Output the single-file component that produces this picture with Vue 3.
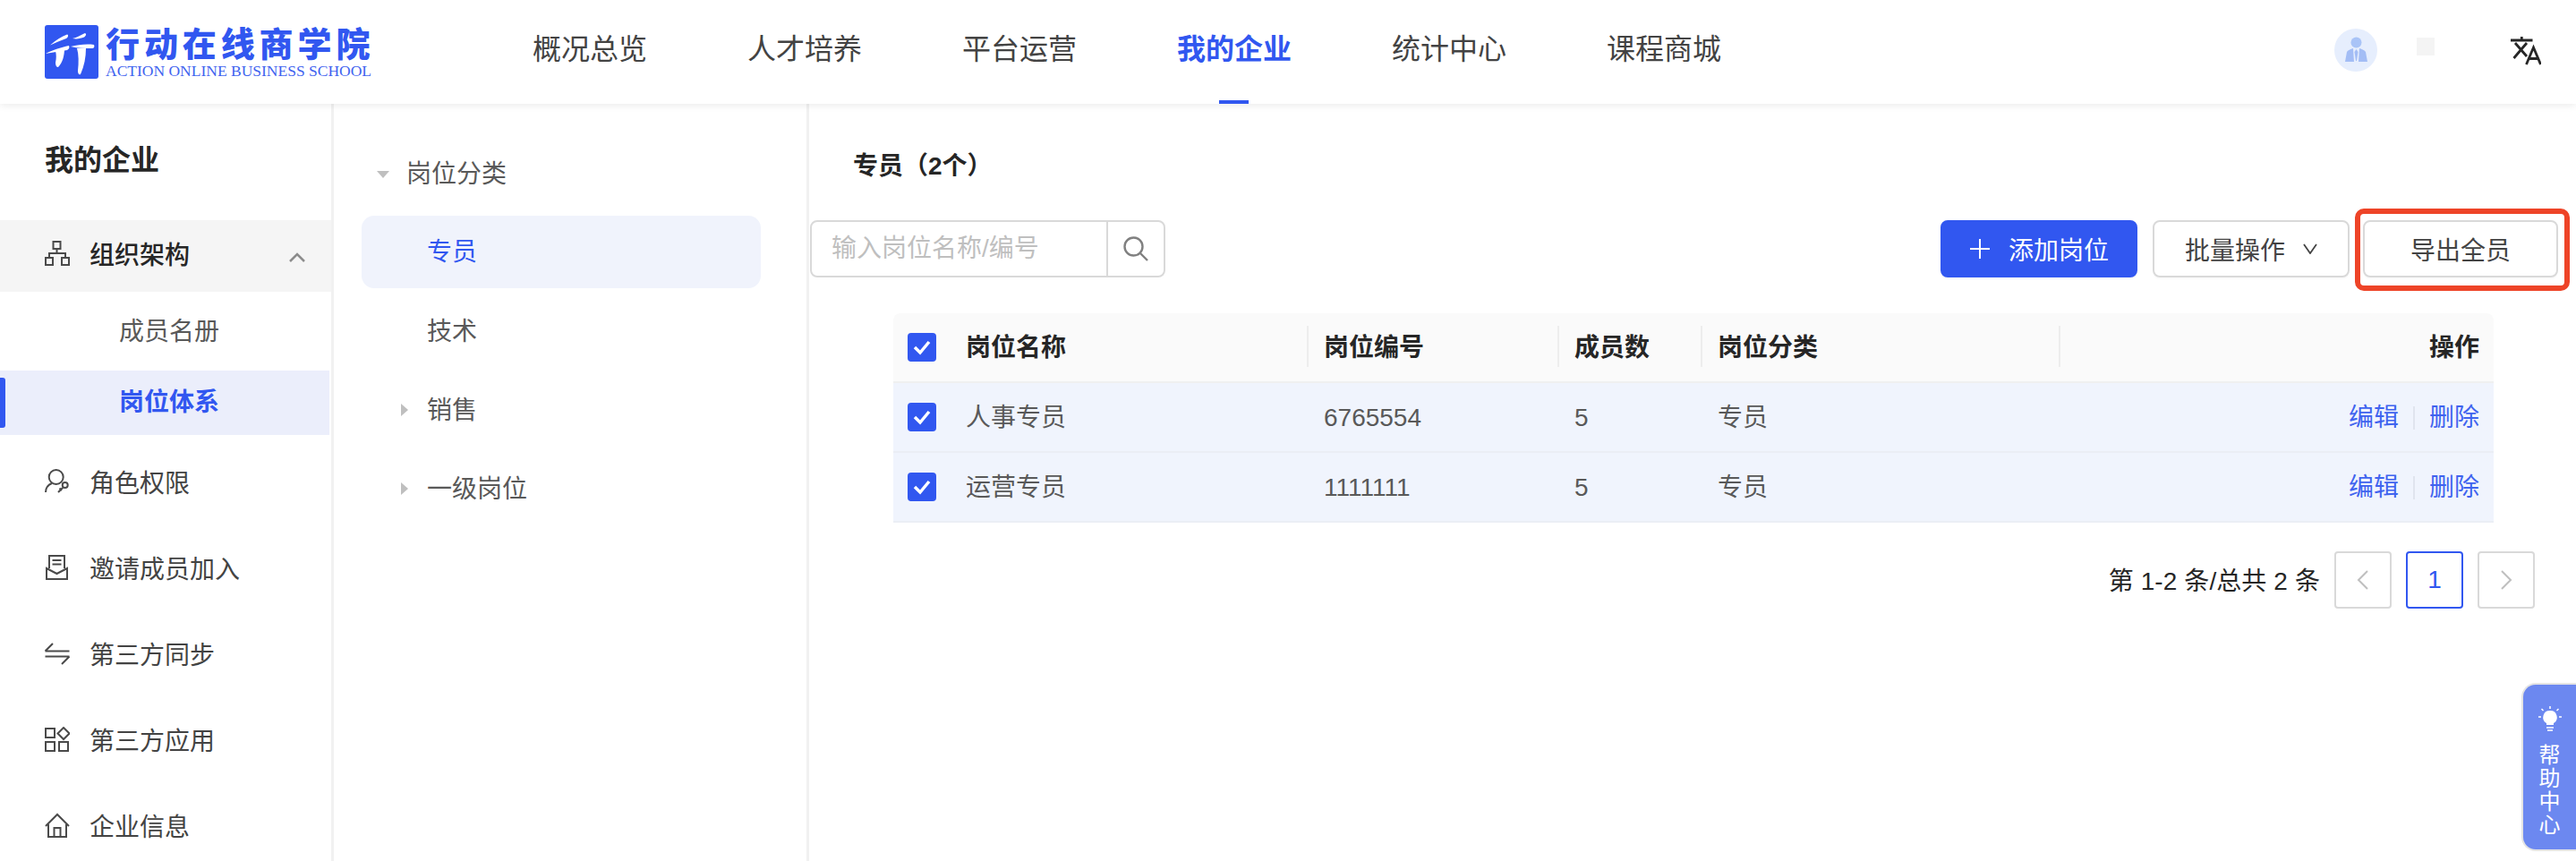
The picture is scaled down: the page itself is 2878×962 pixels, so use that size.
<template>
  <div class="page">
    <header class="topbar">
      <div class="logo">
        <svg class="logoMark" viewBox="0 0 60 60">
          <rect width="60" height="60" rx="3" fill="#3157f0" />
          <g fill="#fff">
            <path d="M6 22.500C12 17 18 13 25 10.500c2 .5 1 3.500-1 4.500-6 2-12 5-18 7.500z" />
            <path d="M1 32c7-4 17-7 26-9 1 2 0 4-2 5-8 1-17 3-24 4z" />
            <path d="M12 29l10-3c0 8-2 16-7 21-2 0-3-2-3-5 1-5 1-9 0-13z" />
            <path d="M31 15c5-1 9-4 14-6 2 1 1 3-1 4.500-4 1.500-8 2.500-13 1.500z" />
            <path d="M29 24c8-2 17-3 26-2 1 2 0 4-2 4-8 0-16 0-24-2z" />
            <path d="M36 26h10c0 10-2 20-6 29-2 1-3-1-3-4 1-9 1-18-1-25z" />
          </g>
        </svg>
        <div class="logoText">
          <div class="logoTitle">行动在线商学院</div>
          <div class="logoSub">ACTION ONLINE BUSINESS SCHOOL</div>
        </div>
      </div>
      <nav class="nav">
        <a v-for="item in navItems" :key="item" class="navItem" :class="{ navActive: item === '我的企业' }">{{ item }}</a>
      </nav>
      <div class="tools">
        <div class="avatar">
          <svg viewBox="0 0 48 48" width="48" height="48">
            <circle cx="24" cy="24" r="24" fill="#e6eefd" />
            <circle cx="24.500" cy="15.500" r="6" fill="#a9c4f7" />
            <path d="M12 37l2-11c1-2 4-3 7-4l1 15zM37 37l-2-11c-1-2-4-3-7-4l-1 15z" fill="#a3bdf5" />
            <path d="M24.500 23l2 3-1.500 10h-1L22.500 26z" fill="#a3bdf5" />
          </svg>
        </div>
        <span class="ghost"></span>
        <svg class="lang" viewBox="0 0 34 32" width="34" height="32" fill="none" stroke="#262626" stroke-width="2.800">
          <path d="M0 4h24.500M12.300 0v4M18 7L3.500 24M5 7l13 15" />
          <path d="M17.500 31L25.500 12l8 19M20 24.500h11" />
        </svg>
      </div>
    </header>

    <div class="body">
      <aside class="side">
        <h2 class="sideTitle">我的企业</h2>
        <div class="sideRow sideOpen">
          <svg class="sideIcon" viewBox="0 0 28 28" fill="none" stroke="#4a4a4a" stroke-width="2">
            <rect x="9.500" y="1" width="8" height="8" />
            <rect x="1" y="19" width="8" height="8" />
            <rect x="19" y="19" width="8" height="8" />
            <path d="M13.500 9v5M5 19v-5h18v5" />
          </svg>
          <span>组织架构</span>
          <svg class="sideCaret" viewBox="0 0 18 12" fill="none" stroke="#8c8c8c" stroke-width="2.500">
            <path d="M1 10l8-8 8 8" />
          </svg>
        </div>
        <div class="subRow">成员名册</div>
        <div class="subRow subActive">岗位体系</div>
        <div class="sideList">
          <div v-for="row in sideItems" :key="row.label" class="sideRow sideItem">
            <svg class="sideIcon" viewBox="0 0 28 28" fill="none" stroke="#4a4a4a" stroke-width="2">
              <path v-for="d in row.paths" :key="d" :d="d" />
            </svg>
            <span>{{ row.label }}</span>
          </div>
        </div>
      </aside>

      <section class="tree">
        <div class="treeRow treeRoot"><i class="caretDown"></i>岗位分类</div>
        <div class="treeRow treeSel">专员</div>
        <div class="treeRow">技术</div>
        <div class="treeRow"><i class="caretRight"></i>销售</div>
        <div class="treeRow"><i class="caretRight"></i>一级岗位</div>
      </section>

      <main class="main">
        <h3 class="mainTitle">专员（2个）</h3>
        <div class="toolbar">
          <div class="search">
            <span class="searchInput">输入岗位名称/编号</span>
            <span class="searchBtn">
              <svg viewBox="0 0 28 28" width="28" height="28" fill="none" stroke="#808080" stroke-width="2.400">
                <circle cx="11.500" cy="11.500" r="10" />
                <path d="M18.500 18.500l8.500 8.500" />
              </svg>
            </span>
          </div>
          <div class="actions">
            <button class="btn btnPrimary">
              <svg viewBox="0 0 24 24" width="24" height="24" stroke="#fff" stroke-width="2"><path d="M12 1v22M1 12h22" /></svg>
              添加岗位
            </button>
            <button class="btn">
              批量操作
              <svg viewBox="0 0 16 12" width="16" height="12" fill="none" stroke="#434343" stroke-width="1.800"><path d="M1 1l7 10 7-10" /></svg>
            </button>
            <div class="exportWrap">
              <button class="btn btnExport">导出全员</button>
              <span class="redMark"></span>
            </div>
          </div>
        </div>

        <div class="table">
          <div class="tr thead">
            <div class="td tdCheck"><span class="check"><svg viewBox="0 0 32 32"><path d="M8 16l6 6 10-12" /></svg></span></div>
            <div class="td tdName">岗位名称</div>
            <div class="td tdCode"><i class="divider"></i>岗位编号</div>
            <div class="td tdCount"><i class="divider"></i>成员数</div>
            <div class="td tdType"><i class="divider"></i>岗位分类</div>
            <div class="td tdOps"><i class="divider"></i>操作</div>
          </div>
          <div v-for="row in rows" :key="row.code" class="tr tbodyRow">
            <div class="td tdCheck"><span class="check"><svg viewBox="0 0 32 32"><path d="M8 16l6 6 10-12" /></svg></span></div>
            <div class="td tdName">{{ row.name }}</div>
            <div class="td tdCode">{{ row.code }}</div>
            <div class="td tdCount">{{ row.count }}</div>
            <div class="td tdType">{{ row.type }}</div>
            <div class="td tdOps"><a class="link">编辑</a><i class="opSep"></i><a class="link">删除</a></div>
          </div>
        </div>

        <div class="pager">
          <span class="pagerText">第 1-2 条/总共 2 条</span>
          <span class="pageBtn">
            <svg viewBox="0 0 14 22" width="14" height="22" fill="none" stroke="#bfbfbf" stroke-width="2"><path d="M12 1L2 11l10 10" /></svg>
          </span>
          <span class="pageBtn pageOn">1</span>
          <span class="pageBtn">
            <svg viewBox="0 0 14 22" width="14" height="22" fill="none" stroke="#bfbfbf" stroke-width="2"><path d="M2 1l10 10L2 21" /></svg>
          </span>
        </div>
      </main>
    </div>

    <div class="help">
      <svg viewBox="0 0 26 28" width="26" height="28">
        <g stroke="#fff" stroke-width="1.500" fill="none">
          <path d="M13 0v3M3.500 3l2 2M22.500 3l-2 2M0 12h3M23 12h3" />
          <path d="M9 24h8M10 27h6" />
        </g>
        <path d="M13 5a7.500 7.500 0 0 1 4 14v2H9v-2a7.500 7.500 0 0 1 4-14z" fill="#fff" />
      </svg>
      <span class="helpText">帮助中心</span>
    </div>
  </div>
</template>

<script setup>
const navItems = ['概况总览', '人才培养', '平台运营', '我的企业', '统计中心', '课程商城']

const sideItems = [
  {
    label: '角色权限',
    paths: [
      'M1 26c0-5 2-8 7-10',
      'M12.700 1a8 8 0 1 1 0 16a8 8 0 0 1 0-16z',
      'M22.700 15a3 3 0 1 1 0 6a3 3 0 0 1 0-6zM20.500 20.500L15 26M16.500 21.500l2.500 2.500',
    ],
  },
  {
    label: '邀请成员加入',
    paths: [
      'M5 15V1h17v14',
      'M8.500 6h10M8.500 10.500h10',
      'M2 15l11.500 6L25 15v12H2z',
    ],
  },
  {
    label: '第三方同步',
    paths: ['M.5 11.500h27M.5 11.500L9 3', 'M27.500 17.500H.5M27.500 17.500L19 26'],
  },
  {
    label: '第三方应用',
    paths: [
      'M1 2h10v10H1zM1 17h10v10H1zM16 17h10v10H16z',
      'M21 1l6.500 6.500L21 14l-6.500-6.500z',
    ],
  },
  {
    label: '企业信息',
    paths: ['M1 15L14 2l13 13', 'M4 13v14h20V13', 'M10.500 27V17h7v10'],
  },
]

const rows = [
  { name: '人事专员', code: '6765554', count: 5, type: '专员' },
  { name: '运营专员', code: '1111111', count: 5, type: '专员' },
]
</script>

<style scoped>
.page {
  width: 2878px;
  height: 962px;
  overflow: hidden;
  position: relative;
  background: #fff;
  font-family: "Liberation Sans", "Noto Sans CJK SC", sans-serif;
  font-size: 28px;
  color: #595959;
}

.topbar {
  height: 116px;
  display: flex;
  align-items: center;
  position: relative;
  z-index: 2;
  background: #fff;
  box-shadow: 0 2px 8px rgba(0, 0, 0, 0.08);
}

.logo {
  display: flex;
  align-items: center;
  gap: 8px;
  width: 595px;
  padding-left: 50px;
  box-sizing: border-box;
  flex: none;
}

.logoMark {
  width: 60px;
  height: 60px;
  flex: none;
}

.logoTitle {
  font-size: 38px;
  font-weight: 900;
  line-height: 40px;
  margin-top: 2px;
  letter-spacing: 4.900px;
  color: #3157f0;
  white-space: nowrap;
}

.logoSub {
  font-family: "Liberation Serif", serif;
  font-size: 17.500px;
  line-height: 18px;
  color: #3f63ef;
  white-space: nowrap;
}

.nav {
  display: flex;
  gap: 112px;
  height: 116px;
}

.navItem {
  position: relative;
  font-size: 32px;
  line-height: 110px;
  color: #434343;
}

.navActive {
  color: #3157f0;
  font-weight: 700;
}

.navActive::after {
  content: "";
  position: absolute;
  left: 47px;
  bottom: 0;
  width: 33px;
  height: 4px;
  background: #3157f0;
}

.tools {
  position: absolute;
  left: 2608px;
  top: 32px;
  display: flex;
  align-items: flex-start;
}

.avatar {
  width: 48px;
  height: 48px;
}

.ghost {
  width: 20px;
  height: 20px;
  margin: 10px 0 0 44px;
  background: #f4f4f4;
}

.lang {
  margin: 9px 0 0 85px;
}

.body {
  display: flex;
  height: 846px;
}

.side {
  width: 373px;
  flex: none;
  box-sizing: border-box;
  border-right: 3px solid #f1f1f1;
}

.sideTitle {
  margin: 0;
  height: 130px;
  padding: 41px 0 0 50px;
  box-sizing: border-box;
  font-size: 32px;
  line-height: 44px;
  font-weight: 700;
  color: #262626;
}

.sideRow {
  display: flex;
  align-items: center;
  padding-left: 50px;
  color: #434343;
}

.sideRow span {
  margin-left: 22px;
}

.sideOpen {
  height: 80px;
  box-sizing: border-box;
  padding-bottom: 7px;
  background: #f5f5f5;
  font-weight: 500;
  color: #262626;
  position: relative;
}

.sideIcon {
  width: 28px;
  height: 28px;
  flex: none;
}

.sideCaret {
  position: absolute;
  left: 323px;
  top: 36px;
  width: 18px;
  height: 12px;
}

.subRow {
  padding-left: 133px;
  height: 88px;
  line-height: 90px;
  color: #595959;
}

.subActive {
  position: relative;
  width: 368px;
  box-sizing: border-box;
  height: 72px;
  line-height: 72px;
  background: #ebeefb;
  color: #3157f0;
  font-weight: 700;
}

.subActive::before {
  content: "";
  position: absolute;
  left: 0;
  top: 8px;
  width: 6px;
  height: 56px;
  border-radius: 0 3px 3px 0;
  background: #3157f0;
}

.sideList {
  padding-top: 4px;
}

.sideItem {
  height: 96px;
}

.tree {
  width: 531px;
  flex: none;
  box-sizing: border-box;
  padding: 37px 0 0 31px;
  border-right: 3px solid #f1f1f1;
}

.treeRow {
  position: relative;
  width: 446px;
  height: 88px;
  line-height: 84px;
  padding-left: 73px;
  box-sizing: border-box;
  color: #595959;
}

.treeRoot {
  padding-left: 50px;
}

.treeSel {
  height: 81px;
  line-height: 82px;
  margin-bottom: 7px;
  background: #f0f3fc;
  border-radius: 14px;
  color: #3157f0;
}

.caretDown {
  position: absolute;
  left: 17px;
  top: 38px;
  border-style: solid;
  border-width: 8px 7px 0;
  border-color: #bfbfbf transparent transparent;
}

.caretRight {
  position: absolute;
  left: 44px;
  top: 34px;
  border-style: solid;
  border-width: 7px 0 7px 8px;
  border-color: transparent transparent transparent #bfbfbf;
}

.main {
  flex: 1;
  min-width: 0;
}

.mainTitle {
  margin: 0;
  height: 130px;
  padding: 50px 0 0 49px;
  box-sizing: border-box;
  font-size: 28px;
  line-height: 40px;
  font-weight: 700;
  color: #262626;
}

.toolbar {
  display: flex;
  justify-content: space-between;
  height: 64px;
  padding-right: 20px;
}

.search {
  display: flex;
  width: 397px;
  height: 64px;
  margin-left: 1px;
  box-sizing: border-box;
  border: 2px solid #d9d9d9;
  border-radius: 8px;
}

.searchInput {
  flex: 1;
  padding-left: 22px;
  line-height: 60px;
  color: #bfbfbf;
  font-size: 28px;
  white-space: nowrap;
}

.searchBtn {
  width: 62px;
  border-left: 2px solid #d9d9d9;
  display: flex;
  align-items: center;
  justify-content: center;
}

.actions {
  display: flex;
  gap: 17px;
}

.btn {
  height: 64px;
  width: 220px;
  padding: 0;
  display: flex;
  align-items: center;
  justify-content: center;
  gap: 20px;
  border: 2px solid #d9d9d9;
  border-radius: 8px;
  background: #fff;
  box-shadow: 0 2px 0 rgba(0, 0, 0, 0.02);
  font: inherit;
  color: #434343;
}

.btnPrimary {
  border-color: #3157f0;
  background: #3157f0;
  color: #fff;
}

.btnExport {
  width: 218px;
}

.exportWrap {
  position: relative;
  margin-left: -2px;
}

.redMark {
  position: absolute;
  left: -9px;
  right: -13px;
  top: -13px;
  bottom: -15px;
  border: 6px solid #ee4428;
  border-radius: 10px;
}

.table {
  width: 1788px;
  margin: 40px 0 0 94px;
}

.tr {
  display: flex;
  align-items: center;
  height: 78px;
  box-sizing: border-box;
  border-bottom: 2px solid #ebeef5;
}

.thead {
  height: 78px;
  background: #fafafa;
  border-bottom-color: #f0f0f0;
  border-radius: 8px 8px 0 0;
  color: #262626;
  font-weight: 700;
}

.tbodyRow {
  background: #f0f4fd;
}

.td {
  position: relative;
  box-sizing: border-box;
  padding-top: 2px;
  padding-left: 19px;
  line-height: 40px;
  white-space: nowrap;
}

.divider {
  position: absolute;
  left: 0;
  top: -3px;
  width: 2px;
  height: 46px;
  background: #ededed;
}

.tdCheck {
  width: 62px;
  padding-top: 0;
  padding-left: 16px;
  display: flex;
}

.tdName {
  width: 400px;
}

.tdCode {
  width: 280px;
}

.tdCount {
  width: 160px;
}

.tdType {
  width: 400px;
}

.tdOps {
  flex: 1;
  padding-right: 16px;
  display: flex;
  justify-content: flex-end;
  align-items: center;
}

.check {
  width: 32px;
  height: 32px;
  border-radius: 4px;
  background: #3157f0;
  display: block;
}

.check svg {
  display: block;
  width: 32px;
  height: 32px;
  fill: none;
  stroke: #fff;
  stroke-width: 3.500;
}

.link {
  color: #3f63ef;
}

.opSep {
  width: 2px;
  height: 26px;
  margin: 0 16px;
  background: #e0e4ee;
}

.pager {
  display: flex;
  align-items: center;
  justify-content: flex-end;
  gap: 16px;
  padding-right: 46px;
  margin-top: 32px;
  color: #262626;
}

.pagerText {
  margin: 0 0 2px 0;
  letter-spacing: 0.100px;
}

.pageBtn {
  width: 64px;
  height: 64px;
  box-sizing: border-box;
  border: 2px solid #d9d9d9;
  border-radius: 4px;
  display: flex;
  align-items: center;
  justify-content: center;
}

.pageOn {
  border-color: #3157f0;
  color: #3157f0;
}

.help {
  position: absolute;
  left: 2817px;
  top: 763px;
  width: 61px;
  height: 188px;
  box-sizing: border-box;
  padding-top: 24px;
  display: flex;
  flex-direction: column;
  align-items: center;
  gap: 14px;
  border: 2px solid #e4e4e4;
  border-right: 0;
  border-radius: 16px 0 0 16px;
  background: #6c88f0;
}

.helpText {
  width: 24px;
  font-size: 24px;
  line-height: 26px;
  color: #fff;
}
</style>

<style>
html,
body {
  margin: 0;
  background: #fff;
}
</style>
